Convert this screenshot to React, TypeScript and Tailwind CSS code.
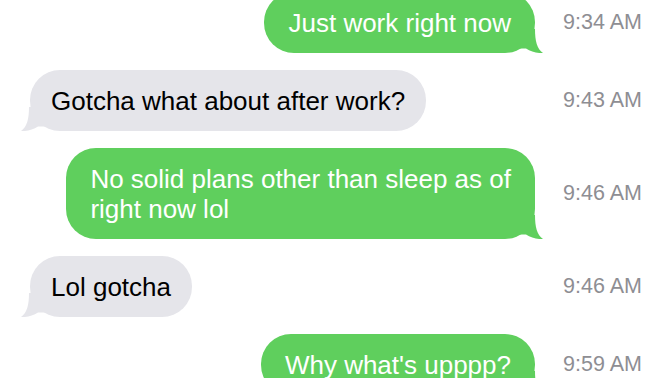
import React from "react";

type Msg = {
  from: "me" | "them";
  text: React.ReactNode;
  time: string;
};

const messages: Msg[] = [
  { from: "me", text: "Just work right now", time: "9:34 AM" },
  { from: "them", text: "Gotcha what about after work?", time: "9:43 AM" },
  {
    from: "me",
    text: (
      <>
        No solid plans other than sleep as of
        <br />
        right now lol
      </>
    ),
    time: "9:46 AM",
  },
  { from: "them", text: "Lol gotcha", time: "9:46 AM" },
  { from: "me", text: "Why what's upppp?", time: "9:59 AM" },
];

// little curled tail at the bottom corner of a bubble
function Tail({ side }: { side: "left" | "right" }) {
  const fill = side === "right" ? "#5fcf5d" : "#e5e5ea";
  return (
    <svg
      width="24"
      height="24"
      viewBox="0 0 24 24"
      className={
        side === "right"
          ? "absolute bottom-0 -right-[8px]"
          : "absolute bottom-0 -left-[9px] -scale-x-100"
      }
    >
      <path d="M0 0 L16 0 C16 12 18 20 24 24 C18 24.5 12 22.5 7 19.5 L0 19.5 Z" fill={fill} />
    </svg>
  );
}

function Bubble({ msg }: { msg: Msg }) {
  const mine = msg.from === "me";
  return (
    <div
      className={
        mine
          ? "relative rounded-[30px] bg-[#5fcf5d] px-6 py-[15.5px] text-white"
          : "relative rounded-[30px] bg-[#e5e5ea] px-[21px] py-[15.5px] text-black"
      }
    >
      <p className="whitespace-nowrap text-[26px] leading-[30px]">{msg.text}</p>
      <Tail side={mine ? "right" : "left"} />
    </div>
  );
}

export default function App() {
  return (
    <div
      className="h-[378px] w-[672px] overflow-hidden bg-white"
      style={{ fontFamily: '"Liberation Sans", Arial, sans-serif' }}
    >
      <div className="-mt-[8px] flex flex-col gap-[17px]">
        {messages.map((m, i) => (
          <div key={i} className="flex items-center">
            <div
              className={
                m.from === "me"
                  ? "flex flex-1 justify-end pr-[28px]"
                  : "flex flex-1 justify-start pl-[30px]"
              }
            >
              <Bubble msg={m} />
            </div>
            <span className="w-[109px] text-[21.5px] text-[#8e8e93]">{m.time}</span>
          </div>
        ))}
      </div>
    </div>
  );
}
